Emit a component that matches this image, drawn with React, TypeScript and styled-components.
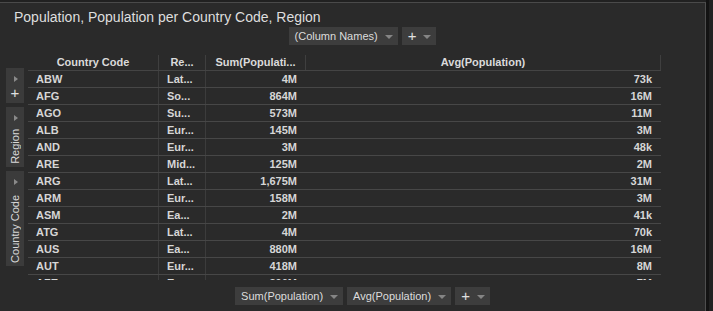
import styled, { createGlobalStyle } from "styled-components";

const GlobalStyle = createGlobalStyle`
  html, body {
    margin: 0;
    padding: 0;
    background: #212121;
  }
  body {
    font-family: "Liberation Sans", Arial, sans-serif;
    overflow: hidden;
  }
`;

const Page = styled.div`
  display: flex;
  width: 713px;
  height: 311px;
  padding-top: 2px;
  box-sizing: border-box;
`;

const Panel = styled.div`
  width: 706px;
  height: 309px;
  box-sizing: border-box;
  background: #2a2a2a;
  border-top: 1px solid #4a4a4a;
  border-right: 1px solid #4e4e4e;
  display: flex;
  flex-direction: column;
`;

const Gutter = styled.div`
  width: 3px;
  background: #131313;
  margin-top: -2px;
`;

const Title = styled.div`
  padding: 4px 0 0 14px;
  height: 20px;
  line-height: 20px;
  font-size: 14px;
  color: #dedede;
  white-space: nowrap;
`;

const Toolbar = styled.div<{ $top: number }>`
  display: flex;
  justify-content: center;
  gap: 4px;
  padding-left: 20px;
  margin-top: ${(p) => p.$top}px;
`;

const DropButton = styled.div`
  display: flex;
  align-items: center;
  height: 18px;
  padding: 0 5px 0 6px;
  gap: 7px;
  background: #3d3d3d;
  color: #dcdcdc;
  font-size: 11px;
  white-space: nowrap;
`;

const Caret = styled.span`
  width: 0;
  height: 0;
  border-left: 4px solid transparent;
  border-right: 4px solid transparent;
  border-top: 4px solid #858585;
  margin-top: 1px;
`;

const Plus = styled.span`
  font-size: 15px;
  line-height: 1;
  color: #e0e0e0;
  margin-top: -1px;
`;

const Body = styled.div`
  display: flex;
  gap: 4px;
  padding-left: 6px;
  margin-top: 10px;
`;

const Tabs = styled.div`
  display: flex;
  flex-direction: column;
  gap: 4px;
  margin-top: 13px;
  width: 18px;
`;

const Tab = styled.div<{ $h: number }>`
  height: ${(p) => p.$h}px;
  background: #3b3b3b;
  display: flex;
  flex-direction: column;
  align-items: center;
  justify-content: space-between;
  padding: 8px 0 3px;
  box-sizing: border-box;
  color: #d8d8d8;
  font-size: 11px;
`;

const Arrow = styled.span`
  width: 0;
  height: 0;
  border-top: 3px solid transparent;
  border-bottom: 3px solid transparent;
  border-left: 4px solid #8a8a8a;
  margin-left: 1px;
`;

const TabLabel = styled.span`
  writing-mode: vertical-rl;
  transform: rotate(180deg);
  white-space: nowrap;
  line-height: 14px;
`;

const Grid = styled.div`
  height: 225px;
  overflow: hidden;
`;

const cols = "131px 47px 100px 355px";

const HeaderRow = styled.div`
  display: grid;
  grid-template-columns: ${cols};
  height: 15px;
  border-bottom: 1px solid #444;
`;

const HeadCell = styled.div`
  border-right: 1px solid #3f3f3f;
  font-size: 11px;
  font-weight: bold;
  color: #dadada;
  text-align: center;
  line-height: 15px;
  white-space: nowrap;
  overflow: hidden;
`;

const Row = styled.div`
  display: grid;
  grid-template-columns: ${cols};
  height: 16px;
  border-bottom: 1px solid #474747;
`;

const Cell = styled.div<{ $right?: boolean; $sep?: boolean }>`
  font-size: 11px;
  font-weight: bold;
  color: #d6d6d6;
  line-height: 16px;
  white-space: nowrap;
  overflow: hidden;
  text-align: ${(p) => (p.$right ? "right" : "left")};
  padding: ${(p) => (p.$right ? "0 8px 0 0" : "0 0 0 8px")};
  border-right: 1px solid ${(p) => (p.$sep ? "#3c3c3c" : "transparent")};
`;

const rows: [string, string, string, string][] = [
  ["ABW", "Lat...", "4M", "73k"],
  ["AFG", "So...", "864M", "16M"],
  ["AGO", "Su...", "573M", "11M"],
  ["ALB", "Eur...", "145M", "3M"],
  ["AND", "Eur...", "3M", "48k"],
  ["ARE", "Mid...", "125M", "2M"],
  ["ARG", "Lat...", "1,675M", "31M"],
  ["ARM", "Eur...", "158M", "3M"],
  ["ASM", "Ea...", "2M", "41k"],
  ["ATG", "Lat...", "4M", "70k"],
  ["AUS", "Ea...", "880M", "16M"],
  ["AUT", "Eur...", "418M", "8M"],
  ["AZE", "Eur...", "396M", "7M"],
];

export default function App() {
  return (
    <Page>
      <GlobalStyle />
      <Panel>
        <Title>Population, Population per Country Code, Region</Title>
        <Toolbar $top={0}>
          <DropButton>
            (Column Names) <Caret />
          </DropButton>
          <DropButton>
            <Plus>+</Plus>
            <Caret />
          </DropButton>
        </Toolbar>
        <Body>
          <Tabs>
            <Tab $h={35}>
              <Arrow />
              <Plus>+</Plus>
            </Tab>
            <Tab $h={60}>
              <Arrow />
              <TabLabel>Region</TabLabel>
            </Tab>
            <Tab $h={95}>
              <Arrow />
              <TabLabel>Country Code</TabLabel>
            </Tab>
          </Tabs>
          <Grid>
            <HeaderRow>
              <HeadCell>Country Code</HeadCell>
              <HeadCell>Re...</HeadCell>
              <HeadCell>Sum(Populati...</HeadCell>
              <HeadCell>Avg(Population)</HeadCell>
            </HeaderRow>
            {rows.map(([code, region, sum, avg]) => (
              <Row key={code}>
                <Cell $sep>{code}</Cell>
                <Cell $sep>{region}</Cell>
                <Cell $right>{sum}</Cell>
                <Cell $right>{avg}</Cell>
              </Row>
            ))}
          </Grid>
        </Body>
        <Toolbar $top={7}>
          <DropButton>
            Sum(Population) <Caret />
          </DropButton>
          <DropButton>
            Avg(Population) <Caret />
          </DropButton>
          <DropButton>
            <Plus>+</Plus>
            <Caret />
          </DropButton>
        </Toolbar>
      </Panel>
      <Gutter />
    </Page>
  );
}
